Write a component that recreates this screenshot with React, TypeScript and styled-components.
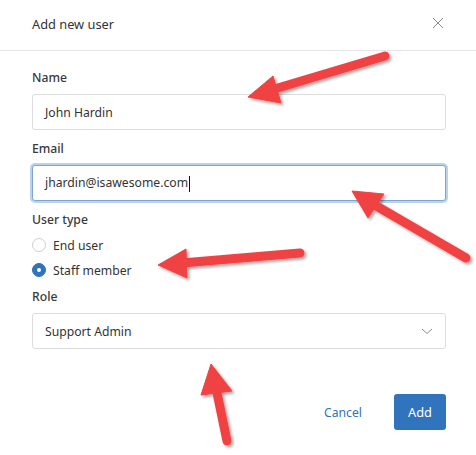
import React from 'react';
import styled, { createGlobalStyle } from 'styled-components';

const GlobalStyle = createGlobalStyle`
  html, body {
    margin: 0;
    padding: 0;
    background: #fff;
  }
  body {
    font-family: "Noto Sans", "Open Sans", Arial, sans-serif;
    color: #333;
  }
`;

const Dialog = styled.div`
  position: relative;
  width: 476px;
  height: 455px;
  background: #fff;
  overflow: hidden;
`;

const Header = styled.div`
  display: flex;
  justify-content: space-between;
  align-items: flex-start;
  height: 51px;
  box-sizing: border-box;
  padding: 15px 32px 0;
  border-bottom: 1px solid #e6e6e6;
`;

const Title = styled.h2`
  margin: 0;
  font-size: 12.8px;
  line-height: 18px;
  font-weight: 400;
  color: #333;
`;

const CloseButton = styled.button`
  border: none;
  background: none;
  padding: 0;
  width: 12px;
  height: 12px;
  margin-top: 2px;
  cursor: pointer;
  display: flex;
`;

const Body = styled.div`
  display: flex;
  flex-direction: column;
  padding: 18px 30px 0 32px;
`;

const Label = styled.label<{ $first?: boolean }>`
  display: block;
  font-size: 12.2px;
  line-height: 18px;
  font-weight: 500;
  color: #3a3a3a;
  margin: ${({ $first }) => ($first ? '0' : '10px')} 0 7px;
`;

const Field = styled.div<{ $focused?: boolean }>`
  display: flex;
  align-items: center;
  justify-content: space-between;
  height: 36px;
  box-sizing: border-box;
  padding: 0 12px;
  border: 1px solid ${({ $focused }) => ($focused ? '#7ea5d2' : '#dcdcdc')};
  border-radius: 3px;
  box-shadow: ${({ $focused }) => ($focused ? '0 0 0 2px #bcd3ec' : 'none')};
  font-size: 12.2px;
  color: #333;
  background: #fff;
`;

const Caret = styled.span`
  display: inline-block;
  width: 1px;
  height: 16px;
  background: #111;
  vertical-align: middle;
  margin-left: 1px;
`;

const RadioGroup = styled.div`
  display: flex;
  flex-direction: column;
  gap: 5px;
  margin: -1px 0 -2px;
`;

const RadioRow = styled.div`
  display: flex;
  align-items: center;
  gap: 7px;
  height: 20px;
  font-size: 12.2px;
  color: #333;
`;

const RadioDot = styled.span<{ $checked?: boolean }>`
  width: 14px;
  height: 14px;
  box-sizing: border-box;
  border-radius: 50%;
  border: 1px solid ${({ $checked }) => ($checked ? '#2f72bd' : '#cfcfcf')};
  background: ${({ $checked }) => ($checked ? '#2f72bd' : '#fff')};
  display: flex;
  align-items: center;
  justify-content: center;

  &::after {
    content: '';
    width: 4px;
    height: 4px;
    border-radius: 50%;
    background: ${({ $checked }) => ($checked ? '#fff' : 'transparent')};
  }
`;

const Footer = styled.div`
  display: flex;
  justify-content: flex-end;
  align-items: center;
  gap: 32px;
  padding: 45px 30px 0 32px;
`;

const LinkButton = styled.button`
  border: none;
  background: none;
  font-family: inherit;
  font-size: 12.2px;
  color: #2f72bd;
  padding: 0;
  height: 36px;
  cursor: pointer;
`;

const PrimaryButton = styled.button`
  border: none;
  border-radius: 3px;
  background: #3174bd;
  color: #fff;
  font-family: inherit;
  font-size: 12.8px;
  width: 52px;
  height: 36px;
  cursor: pointer;
`;

const Annotations = styled.svg`
  position: absolute;
  left: 0;
  top: 0;
  pointer-events: none;
`;

type Arrow = { tail: [number, number]; neck: [number, number]; head: string };

const arrows: Arrow[] = [
  { tail: [385, 56], neck: [271, 90], head: '248,97 273,76 281,103' },
  { tail: [466, 258], neck: [373, 204], head: '352,191 384,194 368,218' },
  { tail: [300, 253], neck: [182, 263], head: '158,265 186,249 187,278' },
  { tail: [227, 441], neck: [216, 388], head: '211,364 201,395 232,391' },
];

const App: React.FC = () => {
  return (
    <Dialog>
      <GlobalStyle />
      <Header>
        <Title>Add new user</Title>
        <CloseButton aria-label="Close">
          <svg width="12" height="12" viewBox="0 0 12 12">
            <path d="M1 1 L11 11 M11 1 L1 11" stroke="#8a8a8a" strokeWidth="1" fill="none" />
          </svg>
        </CloseButton>
      </Header>

      <Body>
        <Label $first>Name</Label>
        <Field>John Hardin</Field>

        <Label>Email</Label>
        <Field $focused>
          <span>
            jhardin@isawesome.com
            <Caret />
          </span>
        </Field>

        <Label>User type</Label>
        <RadioGroup>
          <RadioRow>
            <RadioDot />
            End user
          </RadioRow>
          <RadioRow>
            <RadioDot $checked />
            Staff member
          </RadioRow>
        </RadioGroup>

        <Label>Role</Label>
        <Field>
          Support Admin
          <svg width="12" height="7" viewBox="0 0 12 7">
            <path d="M1 1 L6 5.5 L11 1" stroke="#8a8a8a" strokeWidth="1" fill="none" />
          </svg>
        </Field>
      </Body>

      <Footer>
        <LinkButton>Cancel</LinkButton>
        <PrimaryButton>Add</PrimaryButton>
      </Footer>

      <Annotations width="476" height="455" viewBox="0 0 476 455">
        <defs>
          <filter id="arrowShadow" x="-20%" y="-20%" width="140%" height="140%">
            <feDropShadow dx="2" dy="2" stdDeviation="1.5" floodColor="#000" floodOpacity="0.35" />
          </filter>
        </defs>
        {arrows.map((a, i) => (
          <g key={i} filter="url(#arrowShadow)" fill="#f04242" stroke="#f04242">
            <line
              x1={a.tail[0]}
              y1={a.tail[1]}
              x2={a.neck[0]}
              y2={a.neck[1]}
              strokeWidth="9"
              strokeLinecap="round"
            />
            <polygon points={a.head} strokeWidth="1" strokeLinejoin="round" />
          </g>
        ))}
      </Annotations>
    </Dialog>
  );
};

export default App;
